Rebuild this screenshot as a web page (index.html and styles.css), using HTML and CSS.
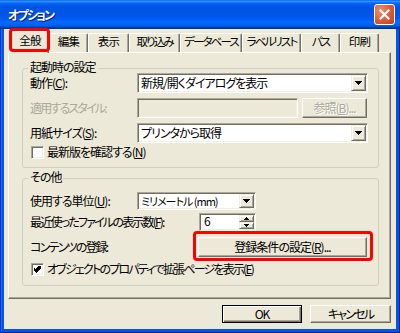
FILE: index.html
```html
<!DOCTYPE html>
<html lang="ja">
<head>
<meta charset="utf-8">
<title>オプション</title>
<link rel="stylesheet" href="styles.css">
</head>
<body>
<div class="window">
  <div class="titlebar">
    <span class="title">オプション</span>
    <span class="close"><svg width="11" height="11" viewBox="0 0 11 11"><path d="M1.5 1.5l8 8M9.5 1.5l-8 8" stroke="#fff" stroke-width="2.2" stroke-linecap="square"/></svg></span>
  </div>
  <div class="client">
    <div class="tabs">
      <div class="tab active">全般</div>
      <div class="tab">編集</div>
      <div class="tab">表示</div>
      <div class="tab kt">取り込み</div>
      <div class="tab kt">データベース</div>
      <div class="tab kt">ラベルリスト</div>
      <div class="tab kt">パス</div>
      <div class="tab">印刷</div>
    </div>
    <div class="panel">
      <div class="group g1">
        <div class="legend">起動時の設定</div>
        <div class="row r1">
          <span class="label w107">動作(<u>C</u>):</span>
          <div class="combo grow"><span class="value">新規/開くダイアログを表示</span><span class="drop"><svg width="7" height="4" viewBox="0 0 7 4"><path d="M0 0h7v1h-1v1h-1v1h-1v1h-1v-1h-1v-1h-1v-1h-1z"/></svg></span></div>
        </div>
        <div class="row r2">
          <span class="label w107 disabled kt">適用するスタイル:</span>
          <div class="edit off"></div>
          <button class="btn browse" disabled>参照(<u>B</u>)...</button>
        </div>
        <div class="row r3">
          <span class="label w107">用紙サイズ(<u>S</u>):</span>
          <div class="combo grow"><span class="value">プリンタから取得</span><span class="drop"><svg width="7" height="4" viewBox="0 0 7 4"><path d="M0 0h7v1h-1v1h-1v1h-1v1h-1v-1h-1v-1h-1v-1h-1z"/></svg></span></div>
        </div>
        <div class="row check r4"><span class="box"></span><span>最新版を確認する(<u>N</u>)</span></div>
      </div>
      <div class="group g2">
        <div class="legend">その他</div>
        <div class="row s1">
          <span class="label w107">使用する単位(<u>U</u>):</span>
          <div class="combo units"><span class="value small">ミリメートル (mm)</span><span class="drop"><svg width="7" height="4" viewBox="0 0 7 4"><path d="M0 0h7v1h-1v1h-1v1h-1v1h-1v-1h-1v-1h-1v-1h-1z"/></svg></span></div>
        </div>
        <div class="row s2">
          <span class="label w169 kt">最近使ったファイルの表示数(<u>F</u>):</span>
          <div class="spin"><span class="num">6</span><span class="spinbtns"><span class="sb"><svg width="5" height="3" viewBox="0 0 5 3"><path d="M2 0h1v1h1v1h1v1h-5v-1h1v-1h1z"/></svg></span><span class="sb"><svg width="5" height="3" viewBox="0 0 5 3"><path d="M0 0h5v1h-1v1h-1v1h-1v-1h-1v-1h-1z"/></svg></span></span></div>
        </div>
        <div class="row s3">
          <span class="label w168 kt">コンテンツの登録:</span>
          <button class="btn register">登録条件の設定(<u>R</u>)...</button>
        </div>
        <div class="row check s4"><span class="box checked"><svg width="7" height="7" viewBox="0 0 7 7"><path d="M6 0h1v3h-1v1h-1v1h-1v1h-1v1h-1v-1h-1v-1h-1v-1h-1v-3h1v1h1v1h1v-1h1v-1h1v-1h1z"/></svg></span><span class="kt">オブジェクトのプロパティで拡張ページを表示(<u>E</u>)</span></div>
      </div>
    </div>
    <div class="buttons">
      <button class="btn default">OK</button>
      <button class="btn kt">キャンセル</button>
    </div>
  </div>
</div>
</body>
</html>
```

FILE: styles.css
```css
* { box-sizing: border-box; }
html, body { margin: 0; padding: 0; }
body {
  width: 400px;
  height: 333px;
  overflow: hidden;
  font-family: "Noto Sans CJK JP", "Noto Sans", sans-serif;
  font-size: 12px;
  line-height: 14px;
  letter-spacing: -1px;
  color: #000;
  font-feature-settings: "palt";
  background: #ECE9D8;
}
u { text-decoration: underline; text-underline-offset: 1px; }
.kt { letter-spacing: -1.8px; }

.window {
  width: 400px;
  height: 333px;
  display: flex;
  flex-direction: column;
  background: #0855DD;
  box-shadow: inset 1px 0 0 #0831D9, inset -1px 0 0 #001EA0, inset 0 -1px 0 #001EA0, inset 2px 0 0 #166AEE;
}
.titlebar {
  height: 29px;
  flex: none;
  display: flex;
  align-items: center;
  padding: 0 5px 0 8px;
  background: linear-gradient(to bottom, #0058EE 0%, #3593FF 4%, #288EFF 6%, #127DFF 8%, #036FFC 10%, #0262EE 14%, #0057E5 20%, #0054E3 24%, #0055EB 56%, #005BF5 66%, #026AFE 76%, #0062EF 86%, #0052D6 92%, #0040AB 94%, #003092 100%);
}
.title {
  flex: 1;
  color: #fff;
  font-weight: bold;
  font-size: 12px;
  letter-spacing: -1.8px;
  text-shadow: 1px 1px 0 #0A1883;
}
.close {
  width: 21px;
  height: 21px;
  border: 1px solid #fff;
  border-radius: 3px;
  background: radial-gradient(circle at 30% 30%, #F08E6C 0%, #DB5A34 55%, #C23D17 100%);
  display: flex;
  align-items: center;
  justify-content: center;
}

.client {
  flex: 1;
  margin: 0 4px 4px;
  background: #ECE9D8;
  padding: 2px 5px 0 4px;
  display: flex;
  flex-direction: column;
}

.tabs {
  height: 21px;
  margin-left: 2px;
  display: grid;
  grid-template-columns: 39px 39px 41px 51px 62px 59px 39px 39px;
  align-items: end;
  position: relative;
  z-index: 1;
  font-size: 11.5px;
}
.tab {
  height: 19px;
  border-top: 1px solid #fff;
  border-left: 1px solid #fff;
  border-right: 1px solid #716F64;
  border-radius: 2px 2px 0 0;
  box-shadow: inset -1px 0 0 #ACA899;
  text-align: center;
  line-height: 15px;
  white-space: nowrap;
  background: #ECE9D8;
  letter-spacing: -0.7px;
}
.tab.kt { letter-spacing: -1.9px; }
.tab.active {
  height: 22px;
  margin: 0 0 -1px 1px;
  line-height: 16px;
  position: relative;
}
.tab.active::after {
  content: "";
  position: absolute;
  left: -3px;
  right: -2px;
  top: -4px;
  bottom: 1px;
  border: 3px solid #F00;
  border-radius: 4px;
}

.panel {
  height: 247px;
  border: 1px solid;
  border-color: #fff #716F64 #716F64 #fff;
  box-shadow: inset -1px -1px 0 #ACA899;
  padding: 15px 11px 0 13px;
}

.group {
  border: 1px solid #D0D0BF;
  border-radius: 3px;
  padding: 0 10px 0 7px;
  display: flex;
  flex-direction: column;
}
.g1 { padding-bottom: 8px; }
.g2 { margin-top: 10px; padding-bottom: 9px; }
.legend {
  align-self: flex-start;
  margin: -9px 0 -1px -2px;
  padding: 0 2px;
  background: #ECE9D8;
  line-height: 14px;
}
.g2 .legend { margin-bottom: 8px; }

.row { display: flex; align-items: center; }
.r1 { height: 20px; }
.r2 { height: 20px; margin-top: 5px; }
.r3 { height: 20px; margin-top: 5px; }
.r4 { height: 14px; margin-top: 2px; }
.s1 { height: 18px; }
.s2 { height: 18px; margin-top: 3px; }
.s3 { height: 20px; margin-top: 6px; }
.s4 { height: 14px; margin-top: 5px; }

.label { flex: none; white-space: nowrap; }
.w107 { width: 107px; }
.w169 { width: 169px; }
.w168 { width: 168px; }
.disabled { color: #ACA899; }
.grow { flex: 1; }

.combo, .edit, .spin {
  height: 100%;
  display: flex;
  align-items: stretch;
  background: #fff;
  border: 1px solid;
  border-color: #ACA899 #fff #fff #ACA899;
  box-shadow: inset 1px 1px 0 #716F64, inset -1px -1px 0 #F1EFE2;
  padding: 1px;
}
.value {
  flex: 1;
  min-width: 0;
  padding-left: 2px;
  display: flex;
  align-items: center;
  white-space: nowrap;
  overflow: hidden;
}
.value.small { font-size: 11px; letter-spacing: -1px; }
.drop, .sb {
  width: 15px;
  flex: none;
  background: #ECE9D8;
  border: 1px solid;
  border-color: #F1EFE2 #716F64 #716F64 #F1EFE2;
  box-shadow: inset 1px 1px 0 #fff, inset -1px -1px 0 #ACA899;
  display: flex;
  align-items: center;
  justify-content: center;
}
.drop svg { display: block; }
.units { width: 119px; }
.edit.off { width: 161px; background: #ECE9D8; }

.spin { width: 57px; }
.num { flex: 1; padding-left: 3px; line-height: 12px; }
.spinbtns { width: 15px; display: flex; flex-direction: column; }
.sb { flex: 1; width: 15px; }
.sb svg { display: block; }

.btn {
  font: inherit;
  letter-spacing: -1px;
  font-feature-settings: "palt";
  color: #000;
  background: #ECE9D8;
  border: 1px solid;
  border-color: #fff #716F64 #716F64 #fff;
  box-shadow: inset -1px -1px 0 #ACA899;
  padding: 0;
  height: 100%;
  line-height: 14px;
}
.btn.kt { letter-spacing: -1.8px; }
.browse {
  width: 65px;
  margin-left: 4px;
  color: #ACA899;
  text-shadow: 1px 1px 0 #fff;
}
.register { width: 169px; position: relative; }
.register::after {
  content: "";
  position: absolute;
  left: -6px;
  right: -7px;
  top: -7px;
  bottom: -5px;
  border: 3px solid #F00;
  border-radius: 4px;
}

.check { white-space: nowrap; }
.box {
  width: 13px;
  height: 13px;
  margin: 0 3px 0 1px;
  flex: none;
  background: #fff;
  border: 1px solid;
  border-color: #ACA899 #fff #fff #ACA899;
  box-shadow: inset 1px 1px 0 #716F64, inset -1px -1px 0 #F1EFE2;
  display: flex;
  align-items: center;
  justify-content: center;
}

.buttons {
  display: flex;
  justify-content: flex-end;
  gap: 8px;
  margin-top: 6px;
  height: 18px;
}
.buttons .btn { width: 81px; }
.buttons .default {
  width: 80px;
  border: 1px solid #000;
  box-shadow: inset 1px 1px 0 #fff, inset -1px -1px 0 #716F64, inset -2px -2px 0 #ACA899;
}
```
